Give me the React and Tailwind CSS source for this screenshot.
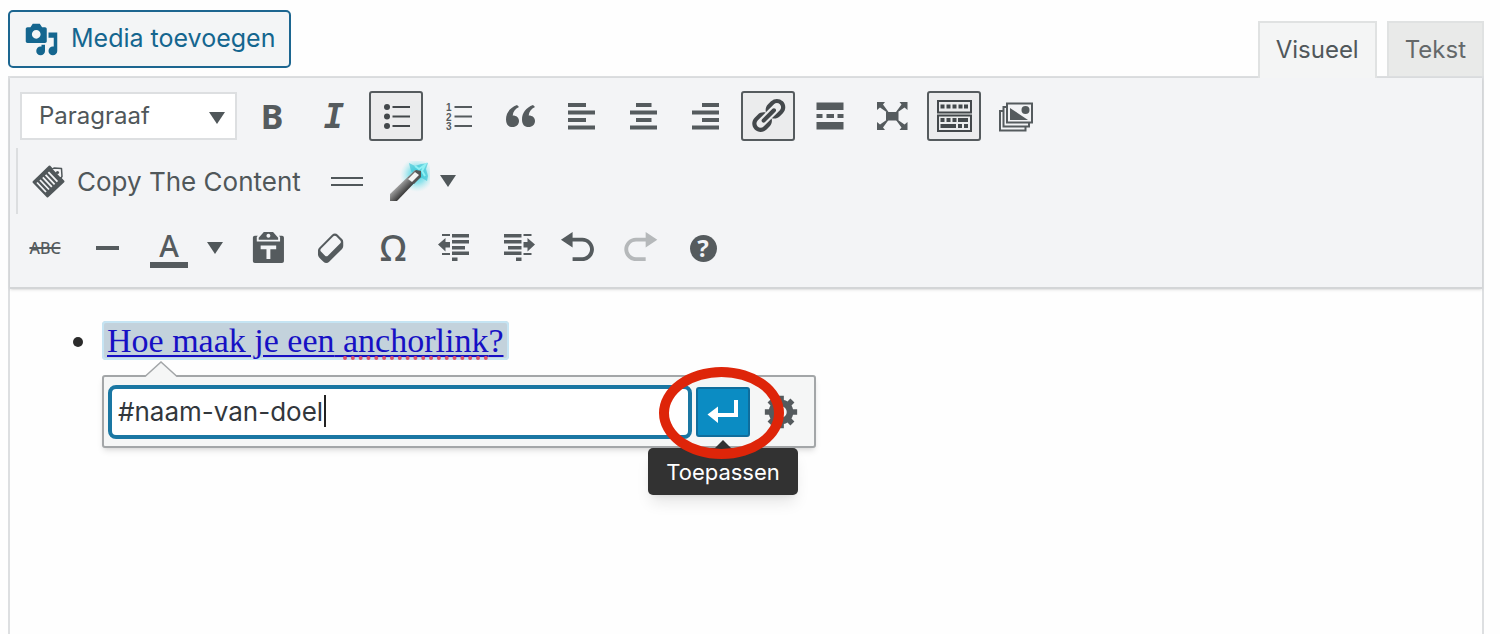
import { useState } from "react";
import clsx from "clsx";

export default function App() {
  const [mode, setMode] = useState("visual");
  const [url, setUrl] = useState("#naam-van-doel");

  return (
    <div className="min-h-screen flex flex-col bg-[#fefefe] pl-2 pr-4 pt-[10px] font-['Inter','Liberation_Sans',sans-serif] text-[#50575a]">
      {/* Media button and editor tabs */}
      <div className="flex justify-between">
        <button className="flex items-center gap-3 h-[58px] mb-2 px-[14px] rounded-[5px] border-2 border-[#1c6690] bg-[#f3f5f6] text-[25px] text-[#14668f]">
          <MediaIcon />
          Media toevoegen
        </button>
        <div className="flex items-end gap-[10px]">
          <Tab label="Visueel" active={mode === "visual"} onClick={() => setMode("visual")} />
          <Tab label="Tekst" active={mode === "text"} onClick={() => setMode("text")} />
        </div>
      </div>

      <div className="flex-1 flex flex-col border-2 border-b-0 border-[#dddfe1]">
        <Toolbar />

        {/* Content */}
        <div className="flex-1 pt-7 pl-[92px] pb-10">
          <ul className="list-disc -ml-[2px] font-['Liberation_Serif',serif] text-[34px] leading-[48px] marker:text-[#2b2b2b]">
            <li>
              <a
                href="#naam-van-doel"
                className="ml-[2px] px-[5px] py-px rounded bg-[#c3d2dc] ring-2 ring-inset ring-[#c5e4f3] text-[#1610c4] underline decoration-2 underline-offset-3"
              >
                Hoe maak je een{" "}
                <span className="underline decoration-dotted decoration-[#dd5468] decoration-4 underline-offset-4">
                  anchorlink
                </span>
                ?
              </a>
            </li>
          </ul>
          <LinkPopup url={url} onChange={setUrl} />
        </div>
      </div>
    </div>
  );
}

function Tab({ label, active, onClick }) {
  return (
    <button
      onClick={onClick}
      className={clsx(
        "px-4 border-2 border-b-0 border-[#e0e2e2] text-2xl",
        active ? "relative z-10 h-[57px] -mb-[2px] pb-[2px] bg-[#f4f5f5]" : "h-[55px] bg-[#e9eae9] text-[#646869]"
      )}
    >
      {label}
    </button>
  );
}

function Toolbar() {
  return (
    <div className="flex flex-col bg-[#f3f4f6] pt-[13px] pb-[14px] border-b-2 border-[#d3d5d7] shadow-sm">
      <div className="flex items-center gap-2 pl-[10px]">
        <div className="relative w-[217px]">
          <select
            aria-label="Opmaak"
            className="appearance-none w-full h-12 pl-[17px] border-2 border-[#dddfe1] bg-white text-2xl"
          >
            <option>Paragraaf</option>
          </select>
          <Caret className="absolute right-3 top-5 pointer-events-none" />
        </div>
        <ToolButton label="Vet">
          <span className="font-['Noto_Sans',sans-serif] font-bold text-[34px] leading-none">B</span>
        </ToolButton>
        <ToolButton label="Cursief">
          <span className="font-['DejaVu_Sans_Mono',monospace] font-bold italic text-[34px] leading-none">I</span>
        </ToolButton>
        <ToolButton label="Lijst met opsommingstekens" active>
          <Icon>
            {[11, 20.5, 30].map((y) => (
              <g key={y}>
                <circle cx="11" cy={y} r="3" />
                <rect x="16.5" y={y - 1} width="17.5" height="2" />
              </g>
            ))}
          </Icon>
        </ToolButton>
        <ToolButton label="Genummerde lijst">
          <Icon>
            {[11, 20.5, 30].map((y, i) => (
              <g key={y}>
                <text x="8" y={y + 4} fontSize="10" fontWeight="700" fontFamily="Liberation Sans">
                  {i + 1}
                </text>
                <rect x="16.5" y={y - 1} width="17.5" height="2" />
              </g>
            ))}
          </Icon>
        </ToolButton>
        <ToolButton label="Citaat">
          <Icon>
            <path d="M17 9C10 11.5 6 17 6 23.5 6 28.5 8.5 31 12.5 31s6.500-2.600 6.500-6-2.500-5.500-6.300-5.500c.4-4 2.500-6.500 6.300-8.500z" />
            <path d="M33 9c-7 2.500-11 8-11 14.500 0 5 2.500 7.500 6.500 7.500s6.500-2.600 6.500-6-2.500-5.500-6.300-5.500c.4-4 2.500-6.500 6.300-8.500z" />
          </Icon>
        </ToolButton>
        <ToolButton label="Links uitlijnen">
          <Icon>
            <path d="M6 7h18v4H6zM6 14.500h27v4H6zM6 22h18v4H6zM6 29.500h27v4H6z" />
          </Icon>
        </ToolButton>
        <ToolButton label="Centreren">
          <Icon>
            <path d="M12 7h15.500v4H12zM6 14.500h27v4H6zM12 22h15.500v4H12zM6 29.500h27v4H6z" />
          </Icon>
        </ToolButton>
        <ToolButton label="Rechts uitlijnen">
          <Icon>
            <path d="M16 7h17v4H16zM6 14.500h27v4H6zM16 22h17v4H16zM6 29.500h27v4H6z" />
          </Icon>
        </ToolButton>
        <ToolButton label="Link invoegen" active>
          <Icon viewBox="-.2 0 20.600 20.600">
            <path d="M17.740 2.760c1.680 1.690 1.680 4.410 0 6.100l-1.530 1.520c-1.120 1.120-2.700 1.470-4.140 1.090l2.620-2.610.76-.77.76-.76c.84-.84.84-2.200 0-3.040-.84-.85-2.200-.85-3.040 0l-.77.76-3.380 3.380c-.37-1.440-.02-3.020 1.100-4.140l1.520-1.530c1.690-1.680 4.420-1.680 6.100 0zM8.590 13.430l5.340-5.340c.42-.42.42-1.100 0-1.520-.44-.43-1.130-.39-1.530 0l-5.330 5.340c-.42.42-.42 1.100 0 1.520.44.43 1.130.39 1.520 0zm-.76 2.290l4.140-4.150c.38 1.440.03 3.020-1.090 4.140l-1.520 1.530c-1.690 1.680-4.410 1.680-6.100 0-1.680-1.680-1.680-4.420 0-6.100l1.530-1.520c1.120-1.120 2.700-1.470 4.140-1.100l-4.140 4.150c-.85.84-.85 2.200 0 3.050.84.84 2.200.84 3.040 0z" />
          </Icon>
        </ToolButton>
        <ToolButton label="Lees meer">
          <Icon>
            <path d="M6.500 6.500h27V14h-27zM6.500 18h6v4h-6zM16.500 18h7.500v4h-7.500zM27.500 18h6v4h-6zM6.500 26h27v7.500h-27z" />
          </Icon>
        </ToolButton>
        <ToolButton label="Volledig scherm">
          <Icon>
            <path d="M14 16h12.500v8.500H14z" />
            <path d="M5 6h8l-2 2.500 5.500 7.500h-2L8 11.500 5 14zM35.500 6h-8l2 2.500L24 16h2l6.500-4.500 3 2.500zM5 34h8l-2-2.500 5.500-7.500h-2L8 28.500 5 26zM35.500 34h-8l2-2.500L24 24h2l6.500 4.500 3-2.500z" />
          </Icon>
        </ToolButton>
        <ToolButton label="Toolbar in-/uitschakelen" active>
          <Icon>
            <g fill="none" stroke="currentColor" strokeWidth="2">
              <rect x="4" y="5" width="33" height="11.500" />
              <rect x="4" y="19.500" width="33" height="15.500" />
            </g>
            <path d="M6.500 8.500h4v4h-4zM12.500 8.500h4v4h-4zM18.500 8.500h4v4h-4zM24.500 8.500h4v4h-4zM30 8.500h4v4h-4zM6.500 22h4v4h-4zM12.500 22h4v4h-4zM18.500 22h4v4h-4zM24 22h10v4H24zM6.500 28h15.500v4H6.500zM24 28h4v4h-4zM30 28h4v4h-4z" />
          </Icon>
        </ToolButton>
        <ToolButton label="Galerij">
          <Icon>
            <g fill="none" stroke="currentColor" strokeWidth="2">
              <path d="M7 15H4v19.500h25.500V31M10.500 11H7.500v19.500H33V27" />
              <rect x="11" y="7.500" width="25" height="19" />
            </g>
            <path d="M14 12l18 12H14z" />
            <circle cx="29.500" cy="14" r="4" />
          </Icon>
        </ToolButton>
      </div>

      {/* Plugin buttons */}
      <div className="flex items-center h-[66px] mt-[7px] ml-[6px] pl-[14px] border-l-2 border-[#dcdee0]">
        <button className="flex items-center gap-3 h-[50px] text-[26px]">
          <CopyIcon />
          Copy The Content
        </button>
        <button aria-label="Scheidingslijn" className="flex items-center h-[50px] ml-[30px]">
          <svg width="32" height="10" viewBox="0 0 32 10" fill="currentColor">
            <path d="M0 1h32v2H0zM0 8h32v2H0z" />
          </svg>
        </button>
        <button aria-label="Shortcodes" className="flex items-center gap-[10px] h-[50px] ml-[26px]">
          <WandIcon />
          <Caret />
        </button>
      </div>

      <div className="flex items-center gap-2 mt-[9px] pl-2">
        <ToolButton label="Doorhalen">
          <span className="font-['Noto_Sans',sans-serif] font-medium text-base line-through decoration-2">ABC</span>
        </ToolButton>
        <ToolButton label="Horizontale lijn">
          <Icon>
            <path d="M9 18h23v4H9z" />
          </Icon>
        </ToolButton>
        <div className="flex">
          <ToolButton label="Tekstkleur">
            <span className="flex flex-col items-center pt-[2px]">
              <span className="font-['Noto_Sans',sans-serif] font-medium text-3xl leading-8">A</span>
              <span className="w-[38px] h-[6px] bg-[#555b5e]" />
            </span>
          </ToolButton>
          <button aria-label="Kies tekstkleur" className="flex items-center justify-center w-[38px] h-[50px]">
            <Caret />
          </button>
        </div>
        <ToolButton label="Plakken als tekst">
          <Icon viewBox="0 0 20.600 20.600">
            <path d="M12.380 2L15 5v1H5V5l2.640-3h4.740zM10 5c.55 0 1-.44 1-1 0-.55-.45-1-1-1s-1 .45-1 1c0 .56.45 1 1 1zm5.450-1H17c.55 0 1 .45 1 1v12c0 .56-.45 1-1 1H3c-.55 0-1-.44-1-1V5c0-.55.45-1 1-1h1.550L4 4.630V7h12V4.630zM14 11V9H6v2h3v5h2v-5h3z" />
          </Icon>
        </ToolButton>
        <ToolButton label="Opmaak wissen">
          <Icon viewBox="-.6 0 20.600 20.600">
            <path d="M14.290 4.590l1.100 1.110c.41.400.61.940.61 1.470v2.120c0 .53-.2 1.070-.61 1.470l-6.630 6.630c-.4.410-.94.610-1.470.61s-1.070-.2-1.470-.61l-1.110-1.100-1.100-1.110c-.41-.4-.61-.94-.61-1.470v-2.120c0-.54.2-1.070.61-1.480l6.630-6.620c.4-.41.940-.61 1.470-.61s1.060.2 1.470.61zm-6.210 9.700l6.420-6.420c.39-.39.390-1.030 0-1.430L12.360 4.300c-.19-.19-.45-.29-.72-.29s-.52.1-.71.290l-6.420 6.420c-.39.400-.39 1.040 0 1.430l2.140 2.140c.38.380 1.040.380 1.430 0z" />
          </Icon>
        </ToolButton>
        <ToolButton label="Speciale karakters">
          <span className="font-['Noto_Sans',sans-serif] font-medium text-4xl leading-none">Ω</span>
        </ToolButton>
        <ToolButton label="Inspringing verkleinen">
          <Icon>
            <path d="M7 6h8v2H7zM7 25h8v2H7zM17 6h17v3.500H17zM17 12h17v3.500H17zM17 18h13v3.500H17zM17 23.500h17v3.500H17zM17 29.500h5.500V33H17zM3 16.500l7.500-6.500v4H15v5.500h-4.500v4z" />
          </Icon>
        </ToolButton>
        <ToolButton label="Inspringing vergroten">
          <Icon>
            <path d="M26.500 6h8v2h-8zM26.500 25h8v2h-8zM7 6h17.500v3.500H7zM7 12h17.500v3.500H7zM11 18h13.500v3.500H11zM7 23.500h17.500v3.500H7zM19 29.500h5.500V33H19zM38 16.500L30.500 10v4h-4v5.500h4v4z" />
          </Icon>
        </ToolButton>
        <ToolButton label="Ongedaan maken">
          <Icon viewBox="0 0 20.600 20.600">
            <path d="M12 5H7V2L1 6l6 4V7h5c2.200 0 4 1.800 4 4s-1.800 4-4 4H7v2h5c3.300 0 6-2.700 6-6s-2.700-6-6-6z" />
          </Icon>
        </ToolButton>
        <ToolButton label="Opnieuw" disabled>
          <Icon viewBox=".3 0 20.600 20.600">
            <path d="M8 5h5V2l6 4-6 4V7H8c-2.200 0-4 1.800-4 4s1.800 4 4 4h5v2H8c-3.300 0-6-2.700-6-6s2.700-6 6-6z" />
          </Icon>
        </ToolButton>
        <ToolButton label="Sneltoetsen">
          <span className="flex items-center justify-center size-[27px] rounded-full bg-[#555b5e] text-[#f3f4f6] font-['Noto_Sans',sans-serif] font-bold text-2xl leading-none">
            ?
          </span>
        </ToolButton>
      </div>
    </div>
  );
}

function ToolButton({ label, active, disabled, children }) {
  return (
    <button
      aria-label={label}
      disabled={disabled}
      className={clsx(
        "flex shrink-0 items-center justify-center w-[54px] h-[50px] rounded-[3px] border-2",
        active ? "border-[#555b5e] bg-[#ebeced] text-[#43484b]" : "border-transparent",
        !active && (disabled ? "text-[#b5b8ba]" : "text-[#555b5e]")
      )}
    >
      {children}
    </button>
  );
}

function LinkPopup({ url, onChange }) {
  return (
    <div className="relative flex items-center w-[714px] max-w-full h-[73px] mt-[10px] pl-1 pr-[6px] rounded-[3px] border-2 border-[#a3a6a8] bg-[#f5f6f6] shadow-md">
      <svg className="absolute left-10 -top-4" width="34" height="17" viewBox="0 0 34 17">
        <path d="M1 16L17 1l16 15v1H1z" fill="#f5f6f6" />
        <path d="M1 15.500L17 1l16 14.500" fill="none" stroke="#a3a6a8" strokeWidth="1.500" />
      </svg>
      <div className="relative flex-1">
        <input
          aria-label="URL"
          value={url}
          onChange={(e) => onChange(e.target.value)}
          className="w-full h-[54px] pl-[6px] rounded-lg border-4 border-[#1a77a3] bg-white text-[26px] text-[#32373c] outline-none"
        />
        <span className="absolute left-[216px] top-[10px] w-[2px] h-8 bg-[#222]" />
      </div>
      <div className="relative ml-1">
        <button
          aria-label="Toepassen"
          className="flex items-center justify-center w-[54px] h-[50px] rounded-[3px] border-2 border-[#0f6d9c] bg-[#0b8cc3] text-white"
        >
          <svg width="32" height="26" viewBox="0 0 32 26" fill="currentColor">
            <path d="M27 1h4v17H11v6L.5 15.500 11 7.500V14h16z" />
          </svg>
        </button>
        {/* Tooltip */}
        <div className="absolute top-[61px] left-1/2 -translate-x-1/2 w-[150px] h-[47px] flex items-center justify-center pt-[3px] rounded-[5px] bg-[#323232] text-[22px] text-white shadow-lg">
          <svg className="absolute -top-2 left-1/2 -translate-x-1/2" width="20" height="10" viewBox="0 0 20 10">
            <path d="M10 0l10 10H0z" fill="#323232" />
          </svg>
          Toepassen
        </div>
        {/* Highlight ring */}
        <div className="absolute z-10 -left-[37px] -top-5 w-[125px] h-[92px] rounded-[50%] border-[10px] border-[#de2509] pointer-events-none" />
      </div>
      <button aria-label="Linkopties" className="flex items-center justify-center w-[54px] h-[50px] ml-1 text-[#555b5e]">
        <svg width="38" height="38" viewBox="-.5 .5 20 20" fill="currentColor">
          <path d="M18 12h-2.180c-.17.700-.44 1.350-.81 1.930l1.540 1.540-2.100 2.100-1.540-1.540c-.58.360-1.230.630-1.910.790V19H8v-2.180c-.68-.16-1.330-.43-1.910-.79l-1.540 1.540-2.120-2.120 1.540-1.540c-.36-.58-.63-1.230-.79-1.910H1V9.030h2.170c.16-.7.440-1.350.800-1.940L2.430 5.550l2.100-2.100 1.540 1.540c.58-.37 1.240-.64 1.930-.81V2h3v2.180c.68.160 1.330.430 1.910.790l1.540-1.540 2.120 2.120-1.540 1.540c.36.590.640 1.240.800 1.940H18V12zm-8.500 1.500c1.660 0 3-1.340 3-3s-1.340-3-3-3-3 1.340-3 3 1.340 3 3 3z" />
        </svg>
      </button>
    </div>
  );
}

function Icon({ viewBox = "0 0 40 40", children }) {
  return (
    <svg className="shrink-0" width="40" height="40" viewBox={viewBox} fill="currentColor">
      {children}
    </svg>
  );
}

function Caret({ className }) {
  return (
    <svg className={className} width="16" height="12" viewBox="0 0 16 12" fill="#50575a">
      <path d="M0 0h16L8 12z" />
    </svg>
  );
}

function MediaIcon() {
  return (
    <svg width="35" height="35" viewBox="0 0 20 20" fill="currentColor">
      <path d="M13 11V4c0-.55-.45-1-1-1h-1.670L9 1H5L3.670 3H2c-.55 0-1 .45-1 1v7c0 .55.450 1 1 1h10c.55 0 1-.45 1-1zM7 4.500c1.380 0 2.500 1.120 2.500 2.500S8.380 9.500 7 9.500 4.500 8.380 4.500 7 5.620 4.500 7 4.500zM14 6h5v10.500c0 1.380-1.120 2.500-2.500 2.500S14 17.880 14 16.500s1.120-2.500 2.500-2.500c.17 0 .34.020.500.050V9h-3V6zm-4 8.050V13h2v3.500c0 1.380-1.120 2.500-2.500 2.500S7 17.880 7 16.500 8.120 14 9.500 14c.17 0 .34.020.500.050z" />
    </svg>
  );
}

function CopyIcon() {
  return (
    <svg width="33" height="34" viewBox="0 0 33 34">
      <path d="M17.500 2.500L1.500 18 15.500 32.500 31.500 17.500z" fill="#50575a" stroke="#50575a" strokeWidth="2" strokeLinejoin="round" />
      <path d="M20 5.500L22 4l7.500.5.5 8-1.500 2z" fill="#f3f4f6" stroke="#50575a" strokeWidth="1.500" strokeLinejoin="round" />
      <circle cx="25.500" cy="8.500" r="1.600" fill="#50575a" />
      <path d="M5 18.500l9 9.500M8 16l9 9.500M10.800 13.400l9 9.500M13.600 10.800l9 9.500M16.400 8.200l9 9.500" stroke="#f3f4f6" strokeWidth="1.800" />
    </svg>
  );
}

function WandIcon() {
  return (
    <svg width="41" height="41" viewBox="0 0 41 41">
      <defs>
        <radialGradient id="glow">
          <stop offset="0" stopColor="#35cfe0" />
          <stop offset=".5" stopColor="#7fe0ea" stopOpacity=".8" />
          <stop offset="1" stopColor="#b5eef2" stopOpacity="0" />
        </radialGradient>
        <linearGradient id="stick" x1="0" y1="0" x2="1" y2="1">
          <stop offset=".35" stopColor="#b0b0b0" />
          <stop offset=".6" stopColor="#3d3d3d" />
        </linearGradient>
      </defs>
      <circle cx="28" cy="14" r="17" fill="url(#glow)" />
      <path d="M20 2l6 3 6-2 7-1-2 6 2 7-1 5-5-3-6 1-5-8z" fill="#2fc3d3" opacity=".6" />
      <path d="M26 5l4 3 6-4-3 6 3 5" fill="none" stroke="#8ff1f4" strokeWidth="2" />
      <path d="M1 33L26 9l6 6L8 40H1z" fill="url(#stick)" />
      <path d="M19 17l8-8 5 1v6l-7 7z" fill="#555" />
      <path d="M19 18l7-7 4 3-7 7z" fill="#f4f4f4" />
    </svg>
  );
}
